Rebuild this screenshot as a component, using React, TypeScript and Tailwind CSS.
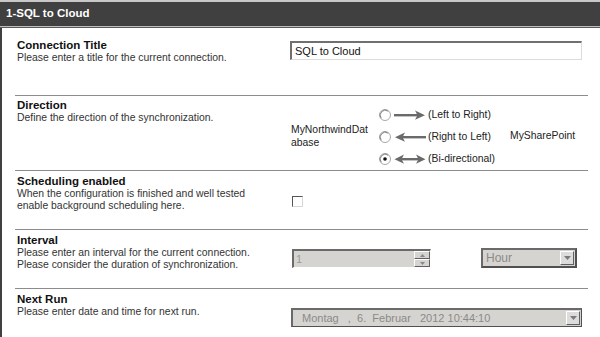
import React from "react";

const F = { fontFamily: '"Liberation Sans", Arial, sans-serif' };

function Radio({ checked }: { checked?: boolean }) {
  return (
    <svg width="12" height="12" viewBox="0 0 12 12" className="shrink-0">
      <circle cx="6" cy="6" r="5.5" fill="#fff" stroke="#a8a8a8" />
      <path d="M2.2 9.2 A5 5 0 0 1 9.2 2.2" fill="none" stroke="#808080" strokeWidth="1" />
      {checked && <circle cx="6" cy="6" r="1.8" fill="#111" />}
    </svg>
  );
}

function Arrow({ kind }: { kind: "r" | "l" | "b" }) {
  return (
    <svg width="34" height="12" viewBox="0 0 34 12" className="shrink-0">
      {kind === "r" && (
        <>
          <rect x="1" y="5" width="24" height="2.4" fill="#6a6a6a" />
          <path d="M22 1.5 L32 6.2 L22 10.8 L24.5 6.2 Z" fill="#6a6a6a" />
        </>
      )}
      {kind === "l" && (
        <>
          <rect x="9" y="5" width="24" height="2.4" fill="#6a6a6a" />
          <path d="M12 1.5 L2 6.2 L12 10.8 L9.5 6.2 Z" fill="#6a6a6a" />
        </>
      )}
      {kind === "b" && (
        <>
          <rect x="8" y="5" width="18" height="2.4" fill="#6a6a6a" />
          <path d="M11 1.5 L1.5 6.2 L11 10.8 L8.5 6.2 Z" fill="#6a6a6a" />
          <path d="M23 1.5 L32.5 6.2 L23 10.8 L25.5 6.2 Z" fill="#6a6a6a" />
        </>
      )}
    </svg>
  );
}

function DropBtn() {
  return (
    <div className="w-[14px] h-[14px] bg-[#dcdcdc] border-t border-l border-t-white border-l-white border-b border-r border-b-[#606060] border-r-[#606060] flex items-center justify-center">
      <svg width="7" height="4" viewBox="0 0 7 4"><path d="M0 0 L7 0 L3.5 4 Z" fill="#7a7a7a" /></svg>
    </div>
  );
}

function Label({ title, lines }: { title: string; lines: string[] }) {
  return (
    <div className="w-[274px] shrink-0 pl-[2px]">
      <div className="text-[11.5px] leading-[14px] font-bold text-[#111]">{title}</div>
      {lines.map((l) => (
        <div key={l} className="text-[10.4px] leading-[12px] text-[#333]">{l}</div>
      ))}
    </div>
  );
}

export default function App() {
  return (
    <div className="w-[600px] h-[337px] bg-white overflow-hidden flex flex-col" style={F}>
      <div className="h-[2px] bg-[#c8c8c8]" />
      <div className="h-[24px] bg-[#404040] flex items-center pl-[6px]">
        <span className="text-white font-bold text-[11.5px]">1-SQL to Cloud</span>
      </div>
      <div className="h-[1px] bg-[#bdbdbd]" />
      <div className="h-[1px] bg-[#5a5a5a]" />
      <div className="flex-1 border-l-2 border-l-[#404040] flex flex-col pl-[13px] pr-[12px]">
        {/* Connection Title */}
        <div className="h-[67px] flex pt-[10px]">
          <Label title="Connection Title" lines={["Please enter a title for the current connection."]} />
          <div className="pt-[3px] pl-[1px]">
            <div className="w-[292px] h-[19px] border-t-2 border-l-2 border-t-[#707070] border-l-[#707070] border-b border-r border-b-[#dcdcdc] border-r-[#dcdcdc] bg-white flex items-center pl-[3px] text-[11px] text-[#111]">
              SQL to Cloud
            </div>
          </div>
        </div>
        {/* Direction */}
        <div className="h-[75px] flex border-t border-t-[#8c8c8c] pt-[2px]">
          <Label title="Direction" lines={["Define the direction of the synchronization."]} />
          <div className="flex items-center pl-[2px] h-[72px] whitespace-nowrap">
            <div className="w-[80px] shrink-0 break-all whitespace-normal text-[10.4px] leading-[13px] text-[#222] mt-[3px]">MyNorthwindDatabase</div>
            <div className="flex flex-col gap-[10px] pl-[8px] pt-[6px] shrink-0">
              <div className="flex items-center h-[12px]"><Radio /><span className="ml-[2px]"><Arrow kind="r" /></span><span className="text-[10.4px] text-[#222] ml-[1px]">(Left to Right)</span></div>
              <div className="flex items-center h-[12px]"><Radio /><span className="ml-[2px]"><Arrow kind="l" /></span><span className="text-[10.4px] text-[#222] ml-[1px]">(Right to Left)</span></div>
              <div className="flex items-center h-[12px]"><Radio checked /><span className="ml-[2px]"><Arrow kind="b" /></span><span className="text-[10.4px] text-[#222] ml-[1px]">(Bi-directional)</span></div>
            </div>
            <div className="pl-[15px] text-[10.4px] text-[#222] mt-[3px] shrink-0">MySharePoint</div>
          </div>
        </div>
        {/* Scheduling */}
        <div className="h-[59px] flex border-t border-t-[#8c8c8c] pt-[3px]">
          <Label title="Scheduling enabled" lines={["When the configuration is finished and well tested", "enable background scheduling here."]} />
          <div className="pt-[22px] pl-[3px]">
            <div className="w-[11px] h-[11px] border-t border-l border-t-[#555] border-l-[#555] border-b border-r border-b-[#d8d8d8] border-r-[#d8d8d8] bg-white" />
          </div>
        </div>
        {/* Interval */}
        <div className="h-[59px] flex border-t border-t-[#8c8c8c] pt-[3px]">
          <Label title="Interval" lines={["Please enter an interval for the current connection.", "Please consider the duration of synchronization."]} />
          <div className="pt-[16px] pl-[3px] flex items-start">
            <div className="w-[139px] h-[19px] border-t-2 border-l-2 border-t-[#6a6a6a] border-l-[#6a6a6a] border-b border-r border-b-white border-r-white bg-[#d6d4d0] flex">
              <div className="flex-1 text-[11px] text-[#9a9a9a] pl-[2px] leading-[16px]">1</div>
              <div className="w-[16px] flex flex-col">
                <div className="h-[8px] bg-[#d6d4d0] border border-t-white border-l-white border-b-[#606060] border-r-[#606060] flex items-center justify-center">
                  <svg width="5" height="3" viewBox="0 0 5 3"><path d="M0 3 L5 3 L2.5 0 Z" fill="#888" /></svg>
                </div>
                <div className="h-[8px] bg-[#d6d4d0] border border-t-white border-l-white border-b-[#606060] border-r-[#606060] flex items-center justify-center">
                  <svg width="5" height="3" viewBox="0 0 5 3"><path d="M0 0 L5 0 L2.5 3 Z" fill="#888" /></svg>
                </div>
              </div>
            </div>
            <div className="ml-[50px] -mt-[1px] w-[96px] h-[20px] border-t-2 border-l-2 border-t-[#6a6a6a] border-l-[#6a6a6a] border-b-2 border-r-2 border-b-[#505050] border-r-[#505050] bg-[#d6d4d0] flex items-center">
              <div className="flex-1 text-[12px] text-[#8a8a8a] pl-[3px]">Hour</div>
              <div className="pr-[1px]"><DropBtn /></div>
            </div>
          </div>
        </div>
        {/* Next Run */}
        <div className="flex-1 flex border-t border-t-[#8c8c8c] pt-[3px]">
          <Label title="Next Run" lines={["Please enter date and time for next run."]} />
          <div className="pt-[16px] pl-[2px]">
            <div className="w-[291px] h-[19px] border-t-2 border-l-2 border-t-[#6a6a6a] border-l-[#6a6a6a] border-b border-r border-b-[#505050] border-r-[#505050] bg-[#d6d4d0] flex items-center">
              <div className="flex-1 text-[11px] text-[#8a8a8a] pl-[9px] whitespace-pre">Montag   ,  6.  Februar   2012 10:44:10</div>
              <div className="pr-[1px]"><DropBtn /></div>
            </div>
          </div>
        </div>
      </div>
    </div>
  );
}
